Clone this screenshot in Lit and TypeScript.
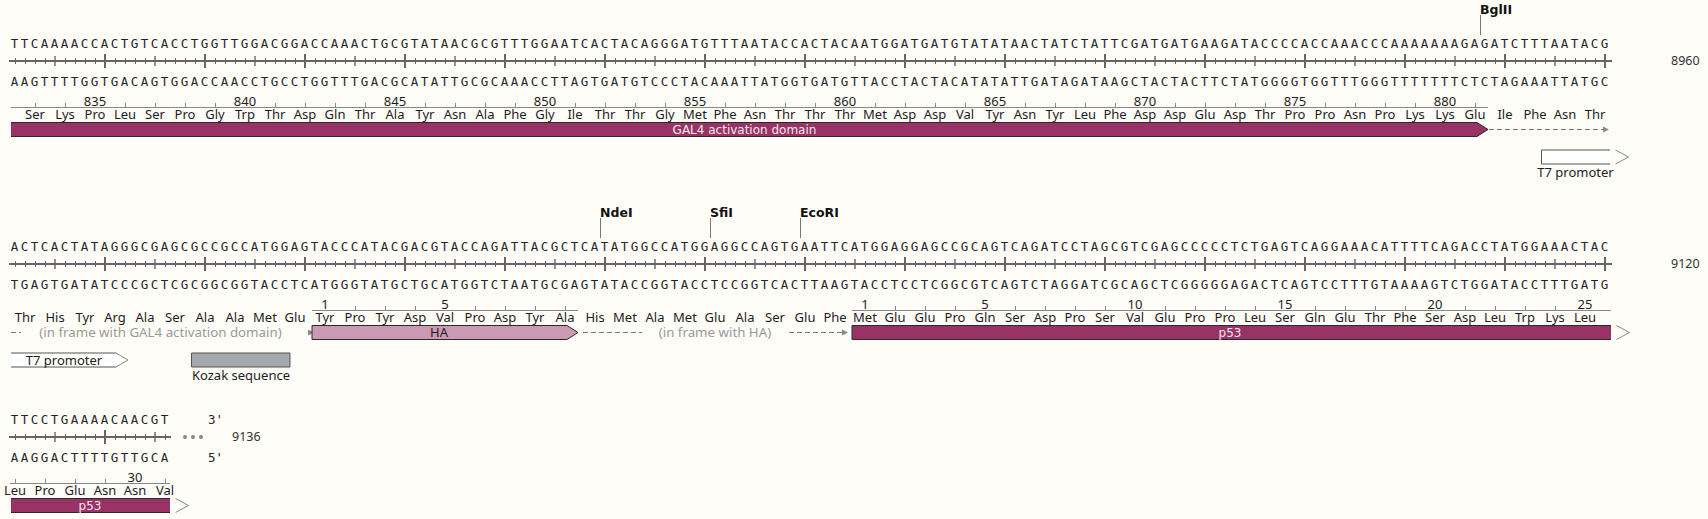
import { LitElement, html, svg, css } from "lit";
import { customElement, property } from "lit/decorators.js";

const COMP: Record<string, string> = { A: "T", T: "A", G: "C", C: "G" };
const complement = (s: string) => s.split("").map((c) => COMP[c]).join("");
const baseX = (i: number) => 15 + 10 * i;
const range = (n: number) => Array.from({ length: n }, (_, i) => i);

interface Ruler { x1: number; x2: number; codonX: number; start: number; count: number; }
interface Bar {
  x1: number; x2: number; tip?: number; fill: string; label?: string; labelX?: number;
  labelClass?: string; left?: boolean; chevron?: boolean; y?: number; openFill?: boolean;
}
interface Block {
  seq: string; height: number; pos: string; posX: number; axisEnd: number;
  aaFirstX: number; aa: string;
  rulers: Ruler[]; bars: Bar[];
  sites: { name: string; x: number }[];
  dashes: { x1: number; x2: number; arrow?: boolean; dash?: boolean }[];
  notes: { text: string; x: number }[];
  labels: { text: string; x: number; y: number }[];
  ends?: boolean;
}

const PLUM = "#993366";

const BLOCKS: Block[] = [
  {
    seq: "TTCAAAACCACTGTCACCTGGTTGGACGGACCAAACTGCGTATAACGCGTTTGGAATCACTACAGGGATGTTTAATACCACTACAATGGATGATGTATATAACTATCTATTCGATGATGAAGATACCCCACCAAACCCAAAAAAAGAGATCTTTAATACG",
    height: 203, pos: "8960", posX: 1671, axisEnd: 1612, aaFirstX: 35,
    aa: "Ser Lys Pro Leu Ser Pro Gly Trp Thr Asp Gln Thr Ala Tyr Asn Ala Phe Gly Ile Thr Thr Gly Met Phe Asn Thr Thr Thr Met Asp Asp Val Tyr Asn Tyr Leu Phe Asp Asp Glu Asp Thr Pro Pro Asn Pro Lys Lys Glu Ile Phe Asn Thr",
    rulers: [{ x1: 11, x2: 1488, codonX: 35, start: 833, count: 49 }],
    bars: [
      { x1: 11, x2: 1477, tip: 1488, fill: PLUM, label: "GAL4 activation domain", labelX: 744.5, labelClass: "on-dark" },
      { x1: 1541.5, x2: 1610, fill: "#ffffff", y: 149.5, left: true, chevron: true, openFill: true },
    ],
    sites: [{ name: "BglII", x: 1480.5 }],
    dashes: [{ x1: 1489, x2: 1604, arrow: true, dash: true }],
    notes: [],
    labels: [{ text: "T7 promoter", x: 1575.5, y: 176.5 }],
  },
  {
    seq: "ACTCACTATAGGGCGAGCGCCGCCATGGAGTACCCATACGACGTACCAGATTACGCTCATATGGCCATGGAGGCCAGTGAATTCATGGAGGAGCCGCAGTCAGATCCTAGCGTCGAGCCCCCTCTGAGTCAGGAAACATTTTCAGACCTATGGAAACTAC",
    height: 173, pos: "9120", posX: 1671, axisEnd: 1612, aaFirstX: 25,
    aa: "Thr His Tyr Arg Ala Ser Ala Ala Met Glu Tyr Pro Tyr Asp Val Pro Asp Tyr Ala His Met Ala Met Glu Ala Ser Glu Phe Met Glu Glu Pro Gln Ser Asp Pro Ser Val Glu Pro Pro Leu Ser Gln Glu Thr Phe Ser Asp Leu Trp Lys Leu",
    rulers: [
      { x1: 312, x2: 578, codonX: 325, start: 1, count: 9 },
      { x1: 852, x2: 1611, codonX: 865, start: 1, count: 25 },
    ],
    bars: [
      { x1: 312, x2: 567, tip: 578, fill: "#cc99b3", label: "HA", labelX: 439, labelClass: "on-light", left: true },
      { x1: 852, x2: 1611, fill: PLUM, label: "p53", labelX: 1230, labelClass: "on-dark", left: true, chevron: true },
      { x1: 11, x2: 116, tip: 128, fill: "#ffffff", y: 149.5, label: "T7 promoter", labelX: 64, labelClass: "on-light", openFill: true },
      { x1: 191.5, x2: 290, fill: "#a3a8ad", y: 149.5, left: true, openFill: false },
    ],
    sites: [
      { name: "NdeI", x: 600.5 },
      { name: "SfiI", x: 710.5 },
      { name: "EcoRI", x: 800.5 },
    ],
    dashes: [
      { x1: 11, x2: 21, dash: true },
      { x1: 304, x2: 309, arrow: true },
      { x1: 583, x2: 642, dash: true },
      { x1: 789, x2: 843, arrow: true, dash: true },
    ],
    notes: [
      { text: "(in frame with GAL4 activation domain)", x: 160.5 },
      { text: "(in frame with HA)", x: 715 },
    ],
    labels: [{ text: "Kozak sequence", x: 241, y: 176.5 }],
  },
  {
    seq: "TTCCTGAAAACAACGT",
    height: 143, pos: "9136", posX: 232, axisEnd: 171, aaFirstX: 15,
    aa: "Leu Pro Glu Asn Asn Val",
    rulers: [{ x1: 10, x2: 170, codonX: 15, start: 26, count: 6 }],
    bars: [{ x1: 11, x2: 170, fill: PLUM, label: "p53", labelX: 90, labelClass: "on-dark", chevron: true }],
    sites: [], dashes: [], notes: [], labels: [], ends: true,
  },
];

@customElement("seq-block")
class SeqBlock extends LitElement {
  static styles = css`
    :host { display: block; }
    svg { display: block; overflow: visible; }
    text { font-family: "Noto Sans", "DejaVu Sans", sans-serif; font-size: 13px; fill: #1c1c24; text-anchor: middle; }
    .base { font-family: "DejaVu Sans Mono", monospace; font-size: 12.5px; fill: #262626; }
    .pos { font-size: 12.5px; fill: #333; text-anchor: start; }
    .site { font-family: "DejaVu Sans", sans-serif; font-weight: 700; font-size: 12.5px; fill: #111; text-anchor: start; }
    .note { fill: #999; font-size: 13.3px; }
    .label { font-size: 13px; }
    .on-dark { font-family: "DejaVu Sans", sans-serif; fill: #f4e6ec; font-size: 12px; }
    .on-light { fill: #222; font-size: 13px; }
    .end { font-family: "DejaVu Sans Mono", monospace; font-size: 12.5px; fill: #262626; text-anchor: start; }
    .axis { stroke: #666; stroke-width: 2; fill: none; shape-rendering: crispEdges; }
    .tick { stroke: #666; stroke-width: 1; shape-rendering: crispEdges; }
    .tick-mid { stroke: #666; stroke-width: 1.4; }
    .tick-big { stroke: #666; stroke-width: 2; shape-rendering: crispEdges; }
    .rule { stroke: #888; stroke-width: 1; shape-rendering: crispEdges; }
    .leader { stroke: #777; stroke-width: 1; shape-rendering: crispEdges; }
    .edge { stroke: #2a2a2a; stroke-width: 1; fill: none; }
    .edge-soft { stroke: #555; stroke-width: 1; fill: none; }
    .chevron { stroke: #888; stroke-width: 1; fill: none; }
    .flow { stroke: #777; stroke-width: 1; stroke-dasharray: 5 3; shape-rendering: crispEdges; }
    .head { fill: #888; }
    .dot { fill: #888; }
  `;

  @property({ attribute: false }) data!: Block;

  private ticks(d: Block) {
    return range(d.seq.length).map((i) => {
      const x = baseX(i);
      const n = i + 1;
      if (n % 10 === 0) return svg`<line class="tick-big" x1=${x} x2=${x} y1="54" y2="68"></line>`;
      if (n % 5 === 0) return svg`<line class="tick-mid" x1=${x} x2=${x} y1="56" y2="66"></line>`;
      return svg`<line class="tick" x1=${x} x2=${x} y1="58" y2="64"></line>`;
    });
  }

  private ruler(r: Ruler) {
    return svg`
      <line class="rule" x1=${r.x1} x2=${r.x2} y1="107.5" y2="107.5"></line>
      ${range(r.count).map((i) => {
        const n = r.start + i;
        const x = r.codonX + i * 30;
        return n === 1 || n % 5 === 0
          ? svg`<text class="num" x=${x} y="106">${n}</text>`
          : svg`<line class="rule" x1=${x} x2=${x} y1="103" y2="107"></line>`;
      })}`;
  }

  private bar(b: Bar) {
    const top = (b.y ?? 122) + 0.5;
    const bottom = top + 14;
    const mid = (top + bottom) / 2;
    const end = b.tip ?? b.x2;
    const shape = b.tip
      ? `${b.x1},${top} ${b.x2},${top} ${b.tip},${mid} ${b.x2},${bottom} ${b.x1},${bottom}`
      : `${b.x1},${top} ${end},${top} ${end},${bottom} ${b.x1},${bottom}`;
    const cls = b.openFill !== undefined ? "edge-soft" : "edge";
    const closedBox = b.openFill === false;
    return svg`
      <polygon points=${shape} fill=${b.fill}></polygon>
      <polyline class=${cls} points="${b.x1},${top} ${b.x2},${top}"></polyline>
      <polyline class=${cls} points="${b.x1},${bottom} ${b.x2},${bottom}"></polyline>
      ${b.left ? svg`<line class=${cls} x1=${b.x1} x2=${b.x1} y1=${top} y2=${bottom}></line>` : ""}
      ${closedBox ? svg`<line class=${cls} x1=${b.x2} x2=${b.x2} y1=${top} y2=${bottom}></line>` : ""}
      ${b.tip
        ? svg`<polyline class=${b.openFill ? "chevron" : "edge"} points="${b.x2},${top} ${b.tip},${mid} ${b.x2},${bottom}"></polyline>`
        : ""}
      ${b.chevron
        ? svg`<polyline class="chevron" points="${b.x2 + 5.5},${top} ${b.x2 + 18.5},${mid} ${b.x2 + 5.5},${bottom}"></polyline>`
        : ""}
      ${b.label ? svg`<text class=${b.labelClass} x=${b.labelX} y=${mid + 4.5}>${b.label}</text>` : ""}`;
  }

  render() {
    const d = this.data;
    const xs = range(d.seq.length).map((i) => baseX(i) - 0.5).join(" ");
    return html`<svg width="1708" height=${d.height} viewBox="0 0 1708 ${d.height}">
      ${d.sites.map((s) => svg`
        <text class="site" x=${s.x - 0.5} y="14">${s.name}</text>
        <line class="leader" x1=${s.x} x2=${s.x} y1="15" y2="35"></line>`)}
      <text class="base" x=${xs} y="48">${d.seq}</text>
      <line class="axis" x1="9" x2=${d.axisEnd} y1="61" y2="61"></line>
      ${this.ticks(d)}
      <text class="base" x=${xs} y="85.5">${complement(d.seq)}</text>
      ${d.ends
        ? svg`
          <text class="end" x="208" y="48">3'</text>
          <text class="end" x="208" y="85.5">5'</text>
          <circle class="dot" cx="185" cy="61" r="2"></circle>
          <circle class="dot" cx="193" cy="61" r="2"></circle>
          <circle class="dot" cx="201" cy="61" r="2"></circle>`
        : ""}
      <text class="pos" x=${d.posX} y="65">${d.pos}</text>
      ${d.rulers.map((r) => this.ruler(r))}
      ${d.aa.split(" ").map((a, i) => svg`<text x=${d.aaFirstX + i * 30} y="119">${a}</text>`)}
      ${d.dashes.map((f) => svg`
        ${f.dash ? svg`<line class="flow" x1=${f.x1} x2=${f.x2} y1="129.5" y2="129.5"></line>` : ""}
        ${f.arrow
          ? svg`<polygon class="head" points="${f.x2 - 1},126.5 ${f.x2 + 5},129.5 ${f.x2 - 1},132.5"></polygon>`
          : ""}`)}
      ${d.notes.map((n) => svg`<text class="note" x=${n.x} y="134">${n.text}</text>`)}
      ${d.bars.map((b) => this.bar(b))}
      ${d.labels.map((l) => svg`<text class="label" x=${l.x} y=${l.y}>${l.text}</text>`)}
    </svg>`;
  }
}

@customElement("app-root")
export class AppRoot extends LitElement {
  static styles = css`
    :host { display: flex; flex-direction: column; width: 1708px; height: 519px; background: #fffdf8; overflow: hidden; }
  `;

  render() {
    return BLOCKS.map((b) => html`<seq-block .data=${b}></seq-block>`);
  }
}

void SeqBlock;
